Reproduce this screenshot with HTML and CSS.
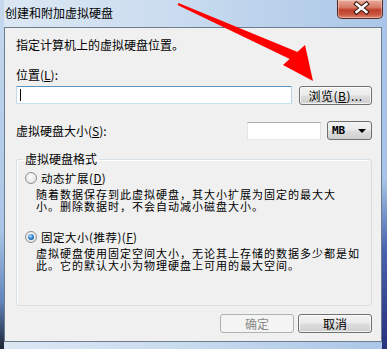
FILE: index.html
```html
<!DOCTYPE html>
<html lang="zh-CN">
<head>
    <meta charset="UTF-8">
    <meta name="viewport" content="width=device-width, initial-scale=1.0">
    <title>创建和附加虚拟硬盘</title>
    <link rel="stylesheet" href="styles.css">
</head>
<body>
    <div class="window">
        <div class="titlebar">
            <span class="title">创建和附加虚拟硬盘</span>
            <div class="close">
                <svg width="46" height="18" viewBox="0 0 46 18">
                    <path d="M18.5 5 L28.5 13 M28.5 5 L18.5 13" stroke="#3a1a12" stroke-width="4.6" stroke-linecap="square"/>
                    <path d="M18.5 5 L28.5 13 M28.5 5 L18.5 13" stroke="#ffffff" stroke-width="2.4" stroke-linecap="square"/>
                </svg>
            </div>
        </div>

        <div class="client">
            <p class="intro">指定计算机上的虚拟硬盘位置。</p>

            <label class="field-label">位置(<u>L</u>):</label>
            <div class="path-row">
                <div class="textbox path focused"><span class="caret"></span></div>
                <button class="btn browse">浏览(<u>B</u>)...</button>
            </div>

            <div class="size-row">
                <label class="size-label">虚拟硬盘大小(<u>S</u>):</label>
                <div class="textbox size"></div>
                <div class="combo">MB<span class="drop"></span></div>
            </div>

            <fieldset class="format">
                <legend>虚拟硬盘格式</legend>
                <div class="option">
                    <span class="radio"></span>
                    <span>动态扩展(<u>D</u>)</span>
                </div>
                <p class="desc">随着数据保存到此虚拟硬盘，其大小扩展为固定的最大大<br>小。删除数据时，不会自动减小磁盘大小。</p>

                <div class="option second">
                    <span class="radio checked"></span>
                    <span>固定大小(推荐)(<u>F</u>)</span>
                </div>
                <p class="desc">虚拟硬盘使用固定空间大小，无论其上存储的数据多少都是如<br>此。它的默认大小为物理硬盘上可用的最大空间。</p>
            </fieldset>

            <div class="actions">
                <button class="btn" disabled>确定</button>
                <button class="btn">取消</button>
            </div>
        </div>

        <!-- 红色箭头标注 -->
        <svg class="pointer" width="387" height="349" viewBox="0 0 387 349">
            <polygon points="177.5,5 178.5,3 300,53 296,62" fill="#ff0000"/>
            <polygon points="283,65 305,45 313,81" fill="#ff0000"/>
        </svg>
    </div>
</body>
</html>
```

FILE: styles.css
```css
* {
    box-sizing: border-box;
}
body {
    margin: 0;
    font-family: "Noto Sans CJK SC", "DejaVu Sans", sans-serif;
    font-size: 12px;
    color: #000;
}
.window {
    position: relative;
    width: 387px;
    height: 349px;
    overflow: hidden;
    background:
        linear-gradient(180deg, #a7c4e6 0, #a7c4e6 180px, #4a63ad 250px, #28317c 100%) right top / 5px 100% no-repeat,
        linear-gradient(180deg, #c6d9ee 0, #a9c5e6 230px, #6286be 300px, #1d2534 100%) left top / 4px 100% no-repeat,
        linear-gradient(90deg, #dce7f3 0%, #cadcef 45%, #aac6e7 100%);
}
.titlebar {
    display: flex;
    justify-content: space-between;
    height: 27px;
}
.title {
    padding-left: 5px;
    line-height: 26px;
}
.close {
    width: 46px;
    height: 19px;
    margin-right: 4px;
    border: 1px solid #5a2a22;
    border-top: none;
    border-radius: 0 0 5px 5px;
    background: linear-gradient(180deg, #e9a999 0%, #d77c69 40%, #c0412c 55%, #c9543e 80%, #e08a76 100%);
    box-shadow: inset 0 0 0 1px rgba(255, 255, 255, 0.35);
}
.close svg {
    display: block;
    margin-top: -1px;
}
.client {
    width: 378px;
    height: 315px;
    margin-left: 4px;
    padding: 9px 9px 0 11px;
    background-color: #f0f0f0;
    border: 1px solid #6d7c8e;
}
.intro {
    margin: 0;
    line-height: 16px;
}
.field-label {
    display: block;
    margin-top: 14px;
    line-height: 16px;
}
.path-row {
    display: flex;
    justify-content: space-between;
    margin-top: 3px;
}
.textbox {
    height: 18px;
    background-color: #fff;
    border: 1px solid #abadb3;
    border-color: #abadb3 #dbdfe6 #e3e9ef #e2e3ea;
}
.textbox.focused {
    border-color: #5794bf #b7d5ea #c7e2f1 #c5daed;
}
.path {
    width: 276px;
    padding: 2px 0 0 3px;
}
.caret {
    display: block;
    width: 1px;
    height: 12px;
    background-color: #000;
}
.btn {
    width: 74px;
    height: 19px;
    padding: 0;
    font-family: inherit;
    font-size: 12px;
    line-height: 17px;
    color: #000;
    border: 1px solid #707070;
    border-radius: 3px;
    background: linear-gradient(180deg, #f2f2f2 0%, #ebebeb 48%, #dddddd 52%, #cfcfcf 100%);
    box-shadow: inset 0 0 0 1px rgba(255, 255, 255, 0.7);
}
.btn:disabled {
    color: #8a8a8a;
    border-color: #adb2b5;
    background: #f4f4f4;
    box-shadow: none;
}
.browse {
    width: 73px;
    letter-spacing: 0.5px;
}
.size-row {
    display: flex;
    align-items: center;
    margin-top: 16px;
}
.size-label {
    flex: 1;
    line-height: 16px;
}
.size {
    width: 74px;
    margin-right: 6px;
}
.combo {
    display: flex;
    align-items: center;
    justify-content: space-between;
    width: 45px;
    height: 19px;
    padding: 0 5px 0 4px;
    font-family: "DejaVu Sans Mono", monospace;
    font-size: 11px;
    font-weight: bold;
    border: 1px solid #707070;
    border-radius: 3px;
    background: linear-gradient(180deg, #f2f2f2 0%, #ebebeb 48%, #dddddd 52%, #cfcfcf 100%);
}
.drop {
    width: 0;
    height: 0;
    border-left: 4px solid transparent;
    border-right: 4px solid transparent;
    border-top: 4px solid #000;
}
.format {
    margin: 12px 0 0;
    padding: 0 0 34px;
    border: 1px solid #d5dfe5;
    border-radius: 3px;
    box-shadow: inset 1px 1px 0 #fff;
}
.format legend {
    margin-left: 6px;
    padding: 0 2px;
    line-height: 14px;
}
.option {
    display: flex;
    align-items: center;
    gap: 4px;
    margin-top: 5px;
    padding-left: 8px;
    height: 14px;
    font-size: 11.5px;
    letter-spacing: 0.5px;
    line-height: 14px;
}
.option.second {
    margin-top: 18px;
}
.radio {
    position: relative;
    width: 12px;
    height: 12px;
    border: 1px solid #8e8f8f;
    border-radius: 50%;
    background: radial-gradient(circle at 45% 40%, #ffffff 0%, #e9e9e9 60%, #d2d2d2 100%);
}
.radio.checked::after {
    content: "";
    position: absolute;
    left: 2px;
    top: 2px;
    width: 6px;
    height: 6px;
    border-radius: 50%;
    background: radial-gradient(circle at 40% 35%, #b9e3fb 0%, #2f7fd0 50%, #0d3c7c 100%);
}
.desc {
    margin: 3px 0 0 19px;
    font-size: 11px;
    letter-spacing: 1px;
    line-height: 12px;
    white-space: nowrap;
}
.actions {
    display: flex;
    justify-content: flex-end;
    gap: 4px;
    margin-top: 8px;
}
.pointer {
    position: absolute;
    left: 0;
    top: 0;
    pointer-events: none;
}
```
